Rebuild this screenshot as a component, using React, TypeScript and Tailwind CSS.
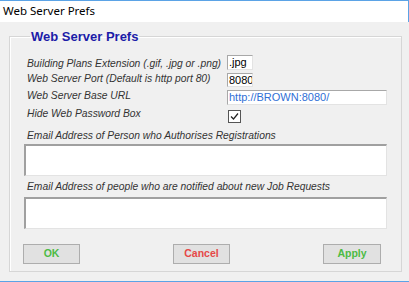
import React from "react";

const font = { fontFamily: '"Liberation Sans", Arial, sans-serif' };

export default function App() {
  return (
    <div className="w-[409px] h-[282px] flex flex-col bg-[#f0f0f0] overflow-hidden" style={font}>
      <div className="h-[22px] shrink-0 bg-white border-t border-r border-[#5ba3e6] flex items-center pl-[3px] pb-[1px]">
        <span className="text-[11.5px] text-black" style={{ fontFamily: '"Noto Sans", sans-serif' }}>Web Server Prefs</span>
      </div>
      <div className="flex-1 flex flex-col">
        <div className="pl-[9px] pr-[7px] pt-[8px] flex-1 flex flex-col">
          <fieldset className="border border-[#d6d6d6] shadow-[inset_1px_1px_0_#ffffff] h-[242px] pl-[14px] pr-[14px] flex flex-col">
            <legend className="ml-[6px] px-[1px] text-[13px] font-bold text-[#1c1ca8] leading-[13px]">Web Server Prefs</legend>
            <div className="flex flex-col text-[10.3px] italic text-[#333] leading-[13px] pl-[3px] mt-[13px] whitespace-nowrap">
              <div className="flex items-start h-[16px]">
                <span className="w-[200px] shrink-0 mt-[1px]">Building Plans Extension (.gif, .jpg or .png)</span>
                <div className="-mt-[1px] w-[26px] h-[15px] bg-white border border-[#a8a8a8] border-r-[#e3e3e3] border-b-[#e3e3e3] not-italic text-[11px] leading-[13px] text-black pl-[1px] overflow-hidden">.jpg</div>
              </div>
              <div className="flex items-start h-[17px]">
                <span className="w-[200px] shrink-0">Web Server Port (Default is http port 80)</span>
                <div className="mt-[1px] w-[26px] h-[14px] bg-white border border-[#a8a8a8] border-r-[#e3e3e3] border-b-[#e3e3e3] not-italic text-[11px] leading-[12px] text-black pl-[1px] overflow-hidden">8080</div>
              </div>
              <div className="flex items-start h-[18px]">
                <span className="w-[200px] shrink-0">Web Server Base URL</span>
                <div className="mt-[1px] w-[160px] h-[15px] bg-white border border-[#a8a8a8] border-r-[#e3e3e3] border-b-[#e3e3e3] not-italic text-[11px] leading-[13px] text-[#2f6fd6] pl-[1px] overflow-hidden">http://BROWN:8080/</div>
              </div>
              <div className="flex items-start h-[22px]">
                <span className="w-[200px] shrink-0">Hide Web Password Box</span>
                <div className="mt-[3px] ml-[1px] w-[13px] h-[13px] bg-white border border-[#555] flex items-center justify-center">
                  <svg width="9" height="9" viewBox="0 0 9 9">
                    <path d="M1 4.5 L3.5 7 L8 1.5" fill="none" stroke="#222" strokeWidth="1.2" />
                  </svg>
                </div>
              </div>
              <div className="h-[15px]">Email Address of Person who Authorises Registrations</div>
            </div>
            <div className="w-[363px] h-[32px] bg-white border border-[#a0a0a0] border-r-[#e3e3e3] border-b-[#e3e3e3] border-t-2 border-l-2"></div>
            <div className="text-[10.3px] italic text-[#333] leading-[13px] pl-[3px] mt-[4px] h-[17px] whitespace-nowrap">Email Address of people who are notified about new Job Requests</div>
            <div className="w-[363px] h-[32px] bg-white border border-[#a0a0a0] border-r-[#e3e3e3] border-b-[#e3e3e3] border-t-2 border-l-2"></div>
            <div className="flex justify-between items-start mt-[15px] pr-[6px] -ml-[1px]">
              <button className="w-[57px] h-[20px] bg-[#e1e1e1] border border-[#adadad] text-[10.5px] font-bold text-[#4cbb44]">OK</button>
              <button className="w-[57px] h-[20px] bg-[#e1e1e1] border border-[#adadad] text-[10.5px] font-bold text-[#e64848]">Cancel</button>
              <button className="w-[58px] h-[20px] bg-[#e1e1e1] border border-[#adadad] text-[10.5px] font-bold text-[#4cbb44]">Apply</button>
            </div>
          </fieldset>
        </div>
        <div className="h-[1px] bg-[#5ba3e6]"></div>
      </div>
    </div>
  );
}
